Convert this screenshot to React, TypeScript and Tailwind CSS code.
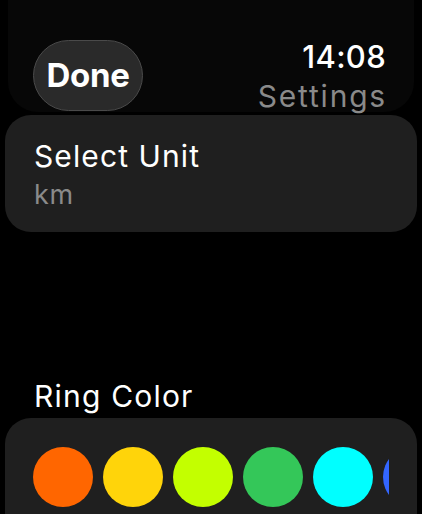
import React from 'react';

const ringColors = ['#ff6600', '#ffd40a', '#c3ff00', '#34c759', '#00ffff', '#3366ff'];

export default function App() {
  return (
    <div className="w-[422px] h-[514px] overflow-hidden bg-black text-white font-['Inter','Liberation_Sans',sans-serif]">
      {/* Header */}
      <header className="mx-[8px] h-[112px] rounded-b-[30px] bg-[#070707] flex items-end justify-between pl-[25px] pr-[28px] pb-[2px]">
        <button className="w-[110px] h-[71px] mb-[-1px] rounded-full bg-[#2a2a2a] border border-[#4a4a4a] text-[33px] font-bold tracking-[-0.3px]">
          Done
        </button>
        <div className="flex flex-col items-end leading-none">
          <span className="text-[31px] font-medium tracking-[0.3px]">14:08</span>
          <span className="mt-[9px] mb-[-1px] text-[30px] text-[#8a8a8a] tracking-[1.8px] mr-[-1px]">Settings</span>
        </div>
      </header>

      {/* Unit */}
      <div className="mx-[5px] mt-[3px] h-[117px] rounded-[26px] bg-[#1f1f1f] pl-[29px] pt-[26px] leading-none">
        <div className="text-[30px] tracking-[1.1px]">Select Unit</div>
        <div className="mt-[10px] text-[27px] text-[#8a8a8a] tracking-[0.8px]">km</div>
      </div>

      {/* Ring color */}
      <div className="mt-[149px] pl-[34px] text-[30px] leading-none tracking-[1.2px]">Ring Color</div>
      <div className="mx-[5px] mt-[7px] h-[120px] rounded-t-[26px] bg-[#1f1f1f] px-[28px] pt-[29px]">
        <div className="flex gap-[10px] overflow-hidden">
          {ringColors.map((c) => (
            <div key={c} className="w-[60px] h-[60px] shrink-0 rounded-full" style={{ backgroundColor: c }} />
          ))}
        </div>
      </div>
    </div>
  );
}
